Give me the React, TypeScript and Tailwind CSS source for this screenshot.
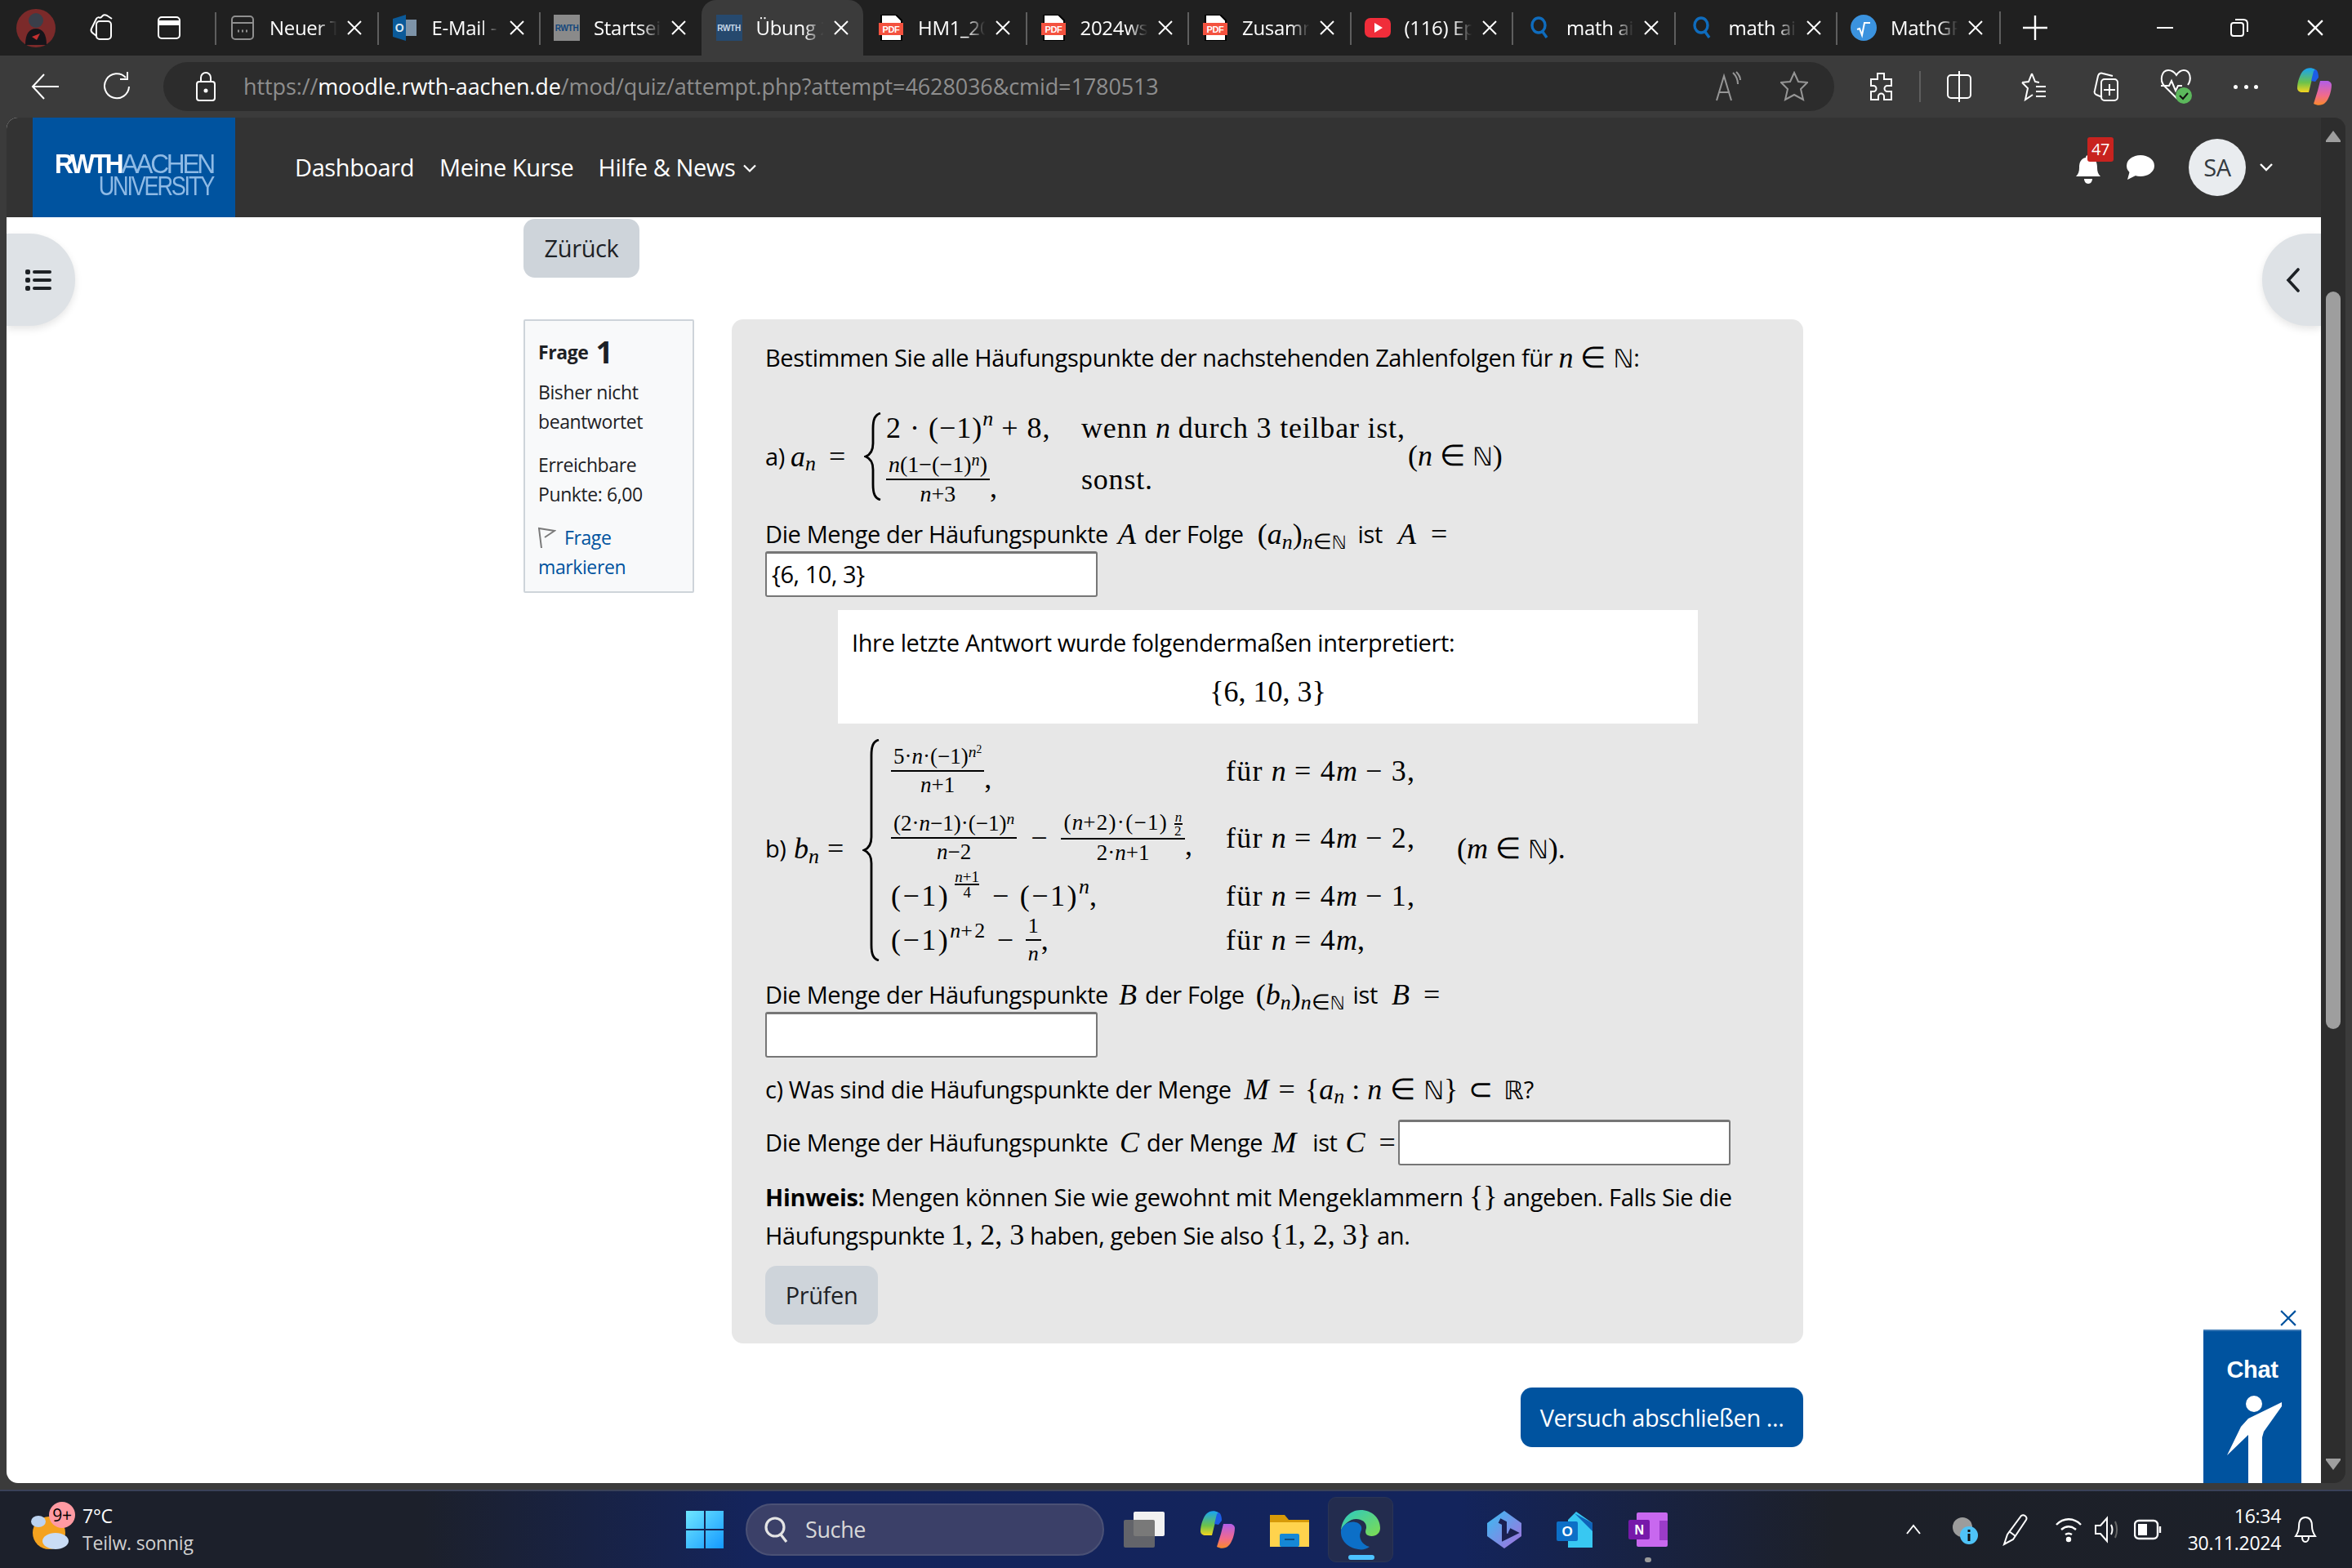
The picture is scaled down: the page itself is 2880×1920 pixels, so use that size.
import { ReactNode } from "react";

const serif = "font-['Liberation_Serif',serif] tracking-normal";

function Mi({ children }: { children: ReactNode }) {
  return <i className={serif}>{children}</i>;
}

function Dbl({ children }: { children: ReactNode }) {
  return <span className="font-['DejaVu_Sans',sans-serif] text-[0.86em] not-italic">{children}</span>;
}

function Op({ children, gap = "mx-[12px]" }: { children: ReactNode; gap?: string }) {
  return <span className={gap}>{children}</span>;
}

function Sp({ children }: { children: ReactNode }) {
  return <span className="relative top-[-0.42em] text-[0.72em] leading-[0]">{children}</span>;
}

function Sb({ children }: { children: ReactNode }) {
  return <span className="relative top-[0.22em] text-[0.72em] leading-[0]">{children}</span>;
}

function Frac({ n, d, bar = "h-[2px]" }: { n: ReactNode; d: ReactNode; bar?: string }) {
  return (
    <span className="inline-flex flex-col items-stretch text-center align-middle leading-none">
      <span className="px-[3px] pb-[3px]">{n}</span>
      <span className={`${bar} bg-black`} />
      <span className="px-[3px] pt-[3px]">{d}</span>
    </span>
  );
}

function Brace({ height }: { height: number }) {
  return (
    <svg width="22" height={height} viewBox={`0 0 22 ${height}`} className="shrink-0 self-start">
      <path
        d={`M20 1 C13 3 11 9 11 20 L11 ${height / 2 - 16} C11 ${height / 2 - 6} 7 ${height / 2 - 2} 2 ${height / 2} C7 ${height / 2 + 2} 11 ${height / 2 + 6} 11 ${height / 2 + 16} L11 ${height - 20} C11 ${height - 9} 13 ${height - 3} 20 ${height - 1}`}
        fill="none"
        stroke="#000"
        strokeWidth="2.8"
      />
    </svg>
  );
}

function AnswerInput({ value, className = "" }: { value?: string; className?: string }) {
  return (
    <div className={`h-[56px] w-[407px] shrink-0 rounded-[3px] border-2 border-t-[3px] border-[#767676] bg-white pl-[6px] text-[29px] leading-[50px] tracking-[-0.45px] text-black ${className}`}>
      {value}
    </div>
  );
}

function CloseX({ size = 18, color = "#fff" }: { size?: number; color?: string }) {
  return (
    <svg width={size} height={size} viewBox="0 0 18 18" stroke={color} strokeWidth="2" className="shrink-0">
      <path d="M1 1l16 16M17 1L1 17" />
    </svg>
  );
}

function PdfIcon() {
  return (
    <svg width="30" height="32" viewBox="0 0 30 32">
      <path d="M3 0h18l7 7v25H3z" fill="#fff" stroke="#000" strokeWidth="2" />
      <rect x="0" y="10" width="30" height="15" fill="#f4523f" />
      <text x="15" y="22" fontSize="11" fontWeight="700" fill="#fff" textAnchor="middle" fontFamily="Liberation Sans">PDF</text>
    </svg>
  );
}

function SearchTabIcon() {
  return (
    <svg width="24" height="30" viewBox="0 0 24 30" fill="none" stroke="#0f6cbd" strokeWidth="3.4">
      <ellipse cx="11" cy="12" rx="8" ry="9" />
      <path d="M16 20l5 7" />
    </svg>
  );
}

function RwthIcon({ active }: { active?: boolean }) {
  return (
    <div className={`flex h-[32px] w-[32px] items-center justify-center text-[10px] font-bold font-['Liberation_Sans',sans-serif] ${active ? "bg-[#26496e] text-[#c5d6e6]" : "bg-[#8a8a8a] text-[#12467c]"}`}>
      RWTH
    </div>
  );
}

const tabs: { label: string; icon: ReactNode; active?: boolean }[] = [
  {
    label: "Neuer Tab",
    icon: (
      <svg width="28" height="32" viewBox="0 0 28 32" fill="none" stroke="#8f8f8f" strokeWidth="2">
        <rect x="1" y="2" width="26" height="28" rx="4" />
        <path d="M1 10h26" />
        <path d="M8 20h2M13 20h2M18 20h2" strokeWidth="3" />
      </svg>
    ),
  },
  {
    label: "E-Mail - Sa",
    icon: (
      <svg width="32" height="32" viewBox="0 0 32 32">
        <rect x="10" y="6" width="20" height="20" fill="#7d93a8" />
        <path d="M1 5l16-5v32L1 27z" fill="#0b5a99" />
        <text x="9" y="21" fontSize="14" fontWeight="700" fill="#d9e6f0" textAnchor="middle" fontFamily="Liberation Sans">O</text>
      </svg>
    ),
  },
  { label: "Startseite", icon: <RwthIcon /> },
  { label: "Übung 2", icon: <RwthIcon active />, active: true },
  { label: "HM1_2024", icon: <PdfIcon /> },
  { label: "2024ws_hm", icon: <PdfIcon /> },
  { label: "Zusammen", icon: <PdfIcon /> },
  {
    label: "(116) Epis",
    icon: (
      <svg width="32" height="32" viewBox="0 0 32 32">
        <rect x="0" y="4" width="32" height="24" rx="7" fill="#f02d3a" />
        <path d="M12 10l10 6-10 6z" fill="#fff" />
      </svg>
    ),
  },
  { label: "math ai", icon: <SearchTabIcon /> },
  { label: "math ai", icon: <SearchTabIcon /> },
  {
    label: "MathGPT",
    icon: (
      <svg width="32" height="32" viewBox="0 0 32 32">
        <circle cx="16" cy="16" r="16" fill="#3b93df" />
        <path d="M8 18l3-1 3 8 3-15h7" fill="none" stroke="#fff" strokeWidth="2" />
      </svg>
    ),
  },
];

function TabStrip() {
  return (
    <div className="flex h-[68px] shrink-0 items-center bg-[#202020] text-[24px] tracking-[-0.3px] text-white">
      <div className="flex w-[263px] shrink-0 items-center">
        <div className="ml-[20px] flex h-[47px] w-[48px] items-center justify-center rounded-full bg-[#7b2a2a]">
          <svg width="32" height="42" viewBox="0 0 32 42">
            <circle cx="16" cy="12" r="9" fill="#3a3f4a" />
            <path d="M3 42c0-14 5-20 13-20s13 6 13 20z" fill="#15151a" />
            <path d="M11 32l10-4-4 8z" fill="#c23030" />
          </svg>
        </div>
        <svg width="38" height="38" viewBox="0 0 38 38" fill="none" stroke="#fff" strokeWidth="2" className="ml-[37px]">
          <rect x="13" y="11" width="18" height="22" rx="4" />
          <path d="M13 29l-5-4c-2-2-2-3-1-5l6-12c1-2 3-2 5-1" />
          <path d="M18 7l3-3c1-1 3-1 5 0l6 4" />
        </svg>
        <svg width="32" height="32" viewBox="0 0 32 32" fill="none" stroke="#fff" strokeWidth="2" className="ml-[48px]">
          <rect x="3" y="3" width="26" height="26" rx="4" />
          <path d="M3 10h26" strokeWidth="6" />
        </svg>
      </div>
      {tabs.map((tab, i) => {
        const hideSep = tab.active || tabs[i - 1]?.active;
        return (
          <div
            key={i}
            className={`relative flex h-full w-[198.5px] shrink-0 items-center pl-[17px] ${tab.active ? "rounded-t-[18px] bg-[#3b3b3b]" : ""}`}
          >
            {!hideSep && <span className="absolute left-0 top-[15px] h-[40px] w-[2px] bg-[#5e5e5e]" />}
            <span className="flex w-[34px] shrink-0 justify-center">{tab.icon}</span>
            <span className="ml-[16px] w-[84px] overflow-hidden whitespace-nowrap [mask-image:linear-gradient(to_right,black_70%,transparent_98%)]">
              {tab.label}
            </span>
            <span className="ml-[11px]">
              <CloseX />
            </span>
          </div>
        );
      })}
      <span className="ml-[1px] h-[40px] w-[2px] bg-[#5e5e5e]" />
      <svg width="30" height="30" viewBox="0 0 30 30" stroke="#fff" strokeWidth="2.4" className="ml-[27px]">
        <path d="M15 0v30M0 15h30" />
      </svg>
      <span className="ml-[134px] h-[2px] w-[20px] bg-white" />
      <svg width="22" height="22" viewBox="0 0 22 22" fill="none" stroke="#fff" strokeWidth="2" className="ml-[70px]">
        <rect x="1" y="5" width="15" height="16" rx="3" />
        <path d="M6 1h10c3 0 5 2 5 5v10" />
      </svg>
      <span className="ml-[72px]">
        <CloseX size={20} />
      </span>
    </div>
  );
}

function ToolIcon({ w, children, className = "" }: { w: number; children: ReactNode; className?: string }) {
  return (
    <svg width={w} height="38" viewBox={`0 0 ${w} 38`} fill="none" stroke="#fff" strokeWidth="2" className={`shrink-0 ${className}`}>
      {children}
    </svg>
  );
}

function Toolbar() {
  return (
    <div className="flex h-[76px] shrink-0 items-center bg-[#3b3b3b]">
      <ToolIcon w={34} className="ml-[38px]">
        <path d="M2 19h32M16 4L2 19l14 15" />
      </ToolIcon>
      <ToolIcon w={34} className="ml-[54px]">
        <path d="M28 8a15 15 0 1 0 4 11" />
        <path d="M30 1v9h-9" />
      </ToolIcon>
      <div className="ml-[40px] flex h-[60px] w-[2046px] shrink-0 items-center rounded-full bg-[#2c2c2c]">
        <ToolIcon w={26} className="ml-[39px]">
          <rect x="2" y="13" width="22" height="23" rx="3" />
          <path d="M7 13V8a6 6 0 0 1 12 0v5" />
          <circle cx="13" cy="24" r="1.5" fill="#fff" />
        </ToolIcon>
        <div className="ml-[33px] flex-1 whitespace-nowrap text-[27px] tracking-[-0.11px] text-[#8e8e8e]">
          https://<span className="text-white">moodle.rwth-aachen.de</span>/mod/quiz/attempt.php?attempt=4628036&amp;cmid=1780513
        </div>
        <ToolIcon w={32} className="opacity-50">
          <path d="M2 36L11 6l9 30M5 26h13M22 2c4 4 6 8 6 14M26 1c3 3 5 6 5 10" />
        </ToolIcon>
        <ToolIcon w={34} className="ml-[48px] mr-[32px] opacity-50">
          <path d="M17 2l5 11 11 1-8 8 3 13-11-6-11 6 3-13-8-8 11-1z" />
        </ToolIcon>
      </div>
      <ToolIcon w={32} className="ml-[41px]">
        <path d="M12 3h8v7h9v8h-5a3 3 0 0 0 0 7h5v10h-9v-4a3 3 0 0 0-7 0v4H4V25h3a3 3 0 0 0 0-7H4v-8h8z" />
      </ToolIcon>
      <span className="ml-[31px] h-[38px] w-[2px] bg-[#5e5e5e]" />
      <ToolIcon w={32} className="ml-[31px]">
        <rect x="2" y="5" width="28" height="28" rx="4" />
        <path d="M16 0v38" />
      </ToolIcon>
      <ToolIcon w={34} className="ml-[58px]">
        <path d="M15 3l4 10 5 1M3 14l8-1 4-10M3 14l7 7-3 14 9-6M20 19h12M20 25h12M20 31h12" />
      </ToolIcon>
      <ToolIcon w={34} className="ml-[54px]">
        <path d="M13 32l-7-3c-2-1-3-3-2-5l4-18c1-3 3-4 6-3l12 3" />
        <rect x="12" y="10" width="20" height="26" rx="4" />
        <path d="M22 16v14M15 23h14" />
      </ToolIcon>
      <svg width="40" height="46" viewBox="0 0 40 46" fill="none" stroke="#fff" strokeWidth="2" className="ml-[49px] shrink-0">
        <path d="M22 38L6 22C0 15 3 3 11 3c5 0 8 3 10 6 2-3 5-6 9-6 8 0 10 11 5 18" />
        <path d="M2 22h10l3-6 5 12 3-6h5" />
        <circle cx="30" cy="34" r="10" fill="#5cb85c" stroke="none" />
        <path d="M25 34l4 4 6-7" stroke="#111" />
      </svg>
      <div className="ml-[51px] flex w-[30px] shrink-0 justify-between">
        <span className="h-[5px] w-[5px] rounded-full bg-white" />
        <span className="h-[5px] w-[5px] rounded-full bg-white" />
        <span className="h-[5px] w-[5px] rounded-full bg-white" />
      </div>
      <CopilotIcon className="ml-[46px]" />
    </div>
  );
}

function CopilotIcon({ className = "" }: { className?: string }) {
  return (
    <svg width="46" height="46" viewBox="0 0 46 46" className={`shrink-0 ${className}`}>
      <defs>
        <linearGradient id="cpA" x1="0" y1="0" x2="0" y2="1">
          <stop offset="0" stopColor="#17a3f5" />
          <stop offset="0.6" stopColor="#6cc24a" />
          <stop offset="1" stopColor="#f5d520" />
        </linearGradient>
        <linearGradient id="cpB" x1="0" y1="0" x2="0" y2="1">
          <stop offset="0" stopColor="#b25ee8" />
          <stop offset="0.6" stopColor="#f16a8c" />
          <stop offset="1" stopColor="#f98a2a" />
        </linearGradient>
      </defs>
      <path d="M10 3c-4 3-8 14-8 22 0 3 3 5 6 5h8l3-12 5-16c-5-3-11-2-14 1z" fill="url(#cpA)" />
      <path d="M36 43c4-3 8-14 8-22 0-3-3-5-6-5h-8l-3 12-5 16c5 3 11 2 14-1z" fill="url(#cpB)" />
      <path d="M24 2c2 0 4 4 4 10l-4 5-5-1 3-12z" fill="#1b5de6" />
    </svg>
  );
}

function NavBar() {
  return (
    <nav className="flex h-[122px] shrink-0 items-center bg-[#333333] pl-[32px] text-[29px] tracking-[-0.4px] text-white">
      <div className="flex h-full w-[248px] shrink-0 flex-col items-end justify-center bg-[#00539f] pr-[27px] pt-[18px] font-['Liberation_Sans',sans-serif] text-[33px] font-bold leading-[27px] tracking-[-3.4px]">
        <div className="origin-right scale-x-[0.96]">
          <span className="text-white">RWTH</span>
          <span className="font-normal text-[#8ebae5]">AACHEN</span>
        </div>
        <div className="origin-right scale-x-[0.82] font-normal tracking-[-2.7px] text-[#8ebae5]">UNIVERSITY</div>
      </div>
      <a className="ml-[73px]">Dashboard</a>
      <a className="ml-[31px]">Meine Kurse</a>
      <a className="ml-[30px]">Hilfe &amp; News</a>
      <svg width="18" height="11" viewBox="0 0 18 11" fill="none" stroke="#fff" strokeWidth="2.2" className="ml-[9px] mt-[2px]">
        <path d="M2 1.5l7 7 7-7" />
      </svg>
      <div className="ml-auto flex items-center">
        <div className="relative h-[40px] w-[30px]">
          <svg width="30" height="36" viewBox="0 0 30 36" fill="#fff" className="absolute left-0 top-[5px]">
            <path d="M15 0c2 0 3 1 3 3 6 1 8 6 8 12 0 5 1 8 4 11H0c3-3 4-6 4-11 0-6 2-11 8-12 0-2 1-3 3-3z" />
            <path d="M10 29h10c0 3-2 6-5 6s-5-3-5-6z" />
          </svg>
          <span className="absolute left-[14px] top-[-17px] flex h-[30px] w-[32px] items-center justify-center rounded-[3px] bg-[#c8231f] text-[20px] leading-none">47</span>
        </div>
        <svg width="34" height="30" viewBox="0 0 34 30" fill="#fff" className="ml-[32px]">
          <ellipse cx="17" cy="13" rx="17" ry="13" />
          <path d="M4 19l-3 11 12-6z" />
        </svg>
        <div className="ml-[42px] flex h-[70px] w-[70px] items-center justify-center rounded-full bg-[#e9ecef] text-[#343a40]">SA</div>
        <svg width="18" height="12" viewBox="0 0 18 12" fill="none" stroke="#fff" strokeWidth="2.4" className="ml-[16px] mr-[58px]">
          <path d="M2 2l7 7 7-7" />
        </svg>
      </div>
    </nav>
  );
}

function Sidebar() {
  return (
    <aside className="h-[335px] w-[209px] shrink-0 rounded-[2px] border-2 border-[#ced4da] bg-[#f8f9fa] pl-[16px] pt-[18px] text-[23px] leading-[36px] tracking-[-0.4px] text-[#1d2125]">
      <div className="flex h-[40px] items-center">
        <span className="font-bold">Frage</span>
        <span className="ml-[9px] text-[37px] font-bold">1</span>
      </div>
      <div className="mt-[11px]">Bisher nicht</div>
      <div>beantwortet</div>
      <div className="mt-[17px]">Erreichbare</div>
      <div>Punkte: 6,00</div>
      <div className="mt-[17px] flex items-center text-[#00539f]">
        <svg width="22" height="26" viewBox="0 0 22 26" fill="none" stroke="#7a7a7a" strokeWidth="2">
          <path d="M4 26L1 2l19 3-12 8" />
        </svg>
        <span className="ml-[10px]">Frage</span>
      </div>
      <div className="text-[#00539f]">markieren</div>
    </aside>
  );
}

function QuestionBox() {
  const m = `${serif} text-[36px]`;
  return (
    <section className="ml-[46px] h-[1254px] w-[1312px] shrink-0 rounded-[14px] bg-[#e7e7e7] pl-[41px] pt-[28px] text-[29px] leading-[38px] text-black">
      <p className="flex h-[38px] items-center whitespace-nowrap">
        Bestimmen Sie alle Häufungspunkte der nachstehenden Zahlenfolgen für&nbsp;<span className={m}><Mi>n</Mi> ∈ <Dbl>ℕ</Dbl></span>:
      </p>

      {/* a) */}
      <div className="mt-[48px] flex h-[110px] items-center whitespace-nowrap pb-[3px]">
        <span className="w-[31px]">a)</span>
        <span className={`${m} w-[47px]`}><Mi>a</Mi><Sb><Mi>n</Mi></Sb></span>
        <span className={`${m} w-[43px]`}>=</span>
        <Brace height={108} />
        <div className={`ml-[5px] grid h-[126px] w-[640px] shrink-0 self-start grid-cols-[239px_1fr] grid-rows-[38px_88px] ${m}`}>
          <span className="flex items-center tracking-[1px]">2 · (−1)<Sp><Mi>n</Mi></Sp>&nbsp;+ 8,</span>
          <span className="flex items-center tracking-[0.8px]">wenn&nbsp;<Mi>n</Mi>&nbsp;durch 3 teilbar ist,</span>
          <span className="flex items-center text-[28px]">
            <Frac
              n={<><Mi>n</Mi>(1−(−1)<Sp><Mi>n</Mi></Sp>)</>}
              d={<><Mi>n</Mi>+3</>}
            />
            <span className="mt-[20px] text-[36px]">,</span>
          </span>
          <span className="flex items-center tracking-[0.8px]">sonst.</span>
        </div>
        <span className={`${m} ml-[-1px]`}>(<Mi>n</Mi> ∈ <Dbl>ℕ</Dbl>)</span>
      </div>

      <p className="mt-[20px] flex h-[38px] items-center whitespace-nowrap">
        Die Menge der Häufungspunkte<span className={`${m} ml-[12px] mr-[10px] tracking-[1px]`}><Mi>A</Mi></span>der Folge
        <span className={`${m} ml-[17px] tracking-[1px]`}>(<Mi>a</Mi><Sb><Mi>n</Mi></Sb>)<Sb><Mi>n</Mi>∈<Dbl>ℕ</Dbl></Sb></span>
        <span className="ml-[14px]">ist</span>
        <span className={`${m} ml-[19px]`}><Mi>A</Mi><span className="ml-[18px]">=</span></span>
      </p>
      <AnswerInput value="{6, 10, 3}" className="mt-[2px]" />

      <div className="ml-[89px] mt-[16px] h-[139px] w-[1053px] bg-white pl-[17px] pt-[21px]">
        <p className="whitespace-nowrap">Ihre letzte Antwort wurde folgendermaßen interpretiert:</p>
        <p className={`${serif} mt-[22px] pr-[17px] text-center text-[36px]`}>{"{6, 10, 3}"}</p>
      </div>

      {/* b) */}
      <div className="mt-[19px] flex h-[272px] items-center whitespace-nowrap pb-[4px]">
        <span className="w-[35px]">b)</span>
        <span className={`${m} w-[41px]`}><Mi>b</Mi><Sb><Mi>n</Mi></Sb></span>
        <span className={`${m} w-[43px]`}>=</span>
        <Brace height={272} />
        <div className={`ml-[13px] mt-[-3px] grid h-[272px] w-[697px] shrink-0 self-start grid-cols-[410px_1fr] grid-rows-[84px_80px_62px_46px] ${m}`}>
          <span className="flex items-center text-[27px]">
            <Frac
              n={<>5·<Mi>n</Mi>·(−1)<Sp><Mi>n</Mi><span className="relative top-[-0.35em] text-[0.7em]">2</span></Sp></>}
              d={<><Mi>n</Mi>+1</>}
            />
            <span className="mt-[18px] text-[36px]">,</span>
          </span>
          <span className="flex items-center tracking-[1.2px]">für&nbsp;<Mi>n</Mi>&nbsp;= 4<Mi>m</Mi>&nbsp;− 3,</span>
          <span className="flex items-center text-[27px]">
            <Frac
              n={<>(2·<Mi>n</Mi>−1)·(−1)<Sp><Mi>n</Mi></Sp></>}
              d={<><Mi>n</Mi>−2</>}
            />
            <span className="mx-[17px] text-[36px]">−</span>
            <Frac
              n={<span className="tracking-[1.3px]">(<Mi>n</Mi>+2)·(−1)<span className="relative top-[-0.6em] my-[-12px] ml-[8px] inline-flex flex-col text-center text-[17px] leading-[15px]"><Mi>n</Mi><span className="h-[2px] bg-black" />2</span></span>}
              d={<>2·<Mi>n</Mi>+1</>}
            />
            <span className="mt-[18px] text-[36px]">,</span>
          </span>
          <span className="flex items-center tracking-[1.2px]">für&nbsp;<Mi>n</Mi>&nbsp;= 4<Mi>m</Mi>&nbsp;− 2,</span>
          <span className="flex items-center tracking-[2.5px]">
            (−1)<span className="relative top-[-14px] ml-[6px] mr-[16px] inline-flex flex-col text-center text-[19px] leading-[17px] tracking-normal"><span><Mi>n</Mi>+1</span><span className="h-[2px] bg-black" /><span>4</span></span>
            <Op gap="mr-[11px]">−</Op>(−1)<Sp><Mi>n</Mi></Sp>,
          </span>
          <span className="flex items-center tracking-[1.2px]">für&nbsp;<Mi>n</Mi>&nbsp;= 4<Mi>m</Mi>&nbsp;− 1,</span>
          <span className="flex items-center tracking-[2.5px]">
            (−1)<Sp><Mi>n</Mi>+2</Sp><Op gap="mx-[12px]">−</Op>
            <span className="text-[26px] tracking-normal"><Frac n="1" d={<Mi>n</Mi>} /></span>,
          </span>
          <span className="flex items-center tracking-[1.2px]">für&nbsp;<Mi>n</Mi>&nbsp;= 4<Mi>m</Mi>,</span>
        </div>
        <span className={`${m} ml-[-4px]`}>(<Mi>m</Mi> ∈ <Dbl>ℕ</Dbl>).</span>
      </div>

      <p className="mt-[22px] flex h-[38px] items-center whitespace-nowrap">
        Die Menge der Häufungspunkte<span className={`${m} ml-[13px] mr-[10px] tracking-[1px]`}><Mi>B</Mi></span>der Folge
        <span className={`${m} ml-[14px] tracking-[1px]`}>(<Mi>b</Mi><Sb><Mi>n</Mi></Sb>)<Sb><Mi>n</Mi>∈<Dbl>ℕ</Dbl></Sb></span>
        <span className="ml-[10px]">ist</span>
        <span className={`${m} ml-[17px]`}><Mi>B</Mi><span className="ml-[17px]">=</span></span>
      </p>
      <AnswerInput className="mt-[2px]" />

      <p className="mt-[20px] flex h-[38px] items-center whitespace-nowrap">
        c) Was sind die Häufungspunkte der Menge
        <span className={`${m} ml-[16px] tracking-[1.5px]`}>
          <Mi>M</Mi><Op>=</Op>{"{"}<Mi>a</Mi><Sb><Mi>n</Mi></Sb><Op gap="mx-[9px]">:</Op><Mi>n</Mi><Op gap="mx-[10px]">∈</Op><Dbl>ℕ</Dbl>{"}"}<Op gap="mx-[13px]">⊂</Op><Dbl>ℝ</Dbl>
        </span>?
      </p>

      <div className="mt-[18px] flex h-[56px] items-center whitespace-nowrap">
        <span className="flex w-[775px] shrink-0 items-center">
          Die Menge der Häufungspunkte<span className={`${m} ml-[14px] mr-[9px] tracking-[1px]`}><Mi>C</Mi></span>der Menge
          <span className={`${m} ml-[11px] mr-[20px] tracking-[1px]`}><Mi>M</Mi></span>ist
          <span className={`${m} ml-[10px]`}><Mi>C</Mi><span className="ml-[17px]">=</span></span>
        </span>
        <AnswerInput />
      </div>

      <p className="mt-[15px] whitespace-nowrap leading-[46px]">
        <span className="tracking-[-0.22px]"><b>Hinweis:</b> Mengen können Sie wie gewohnt mit Mengeklammern</span> <span className={`${m} tracking-[4px]`}>{"{}"}</span> angeben. Falls Sie die
        <br />
        Häufungspunkte <span className={m}>1, 2, 3</span> haben, geben Sie also <span className={m}>{"{1, 2, 3}"}</span> an.
      </p>

      <button className="mt-[14px] h-[72px] w-[138px] rounded-[14px] bg-[#ced4da] text-[#1d2125]">Prüfen</button>
    </section>
  );
}

function BrowserContent() {
  return (
    <div className="flex min-h-0 flex-1 bg-[#3b3b3b] px-[8px] pb-[8px]">
      <div className="relative flex min-w-0 flex-1 flex-col overflow-hidden rounded-tl-[14px] rounded-bl-[14px] bg-white">
        <NavBar />
        <main className="flex-1 pl-[633px]">
          <button className="mt-[2px] block h-[72px] w-[142px] rounded-[14px] bg-[#ced4da] text-[29px] text-[#1d2125]">Zürück</button>
          <div className="mt-[51px] flex">
            <Sidebar />
            <QuestionBox />
          </div>
          <div className="ml-[1221px] mt-[54px] flex h-[73px] w-[346px] items-center justify-center whitespace-nowrap rounded-[14px] bg-[#00539f] text-[29px] tracking-[-0.45px] text-white">
            Versuch abschließen ...
          </div>
        </main>

        {/* course index / block drawer toggles */}
        <div className="absolute left-0 top-[142px] flex h-[113px] w-[84px] items-center rounded-r-[56px] bg-[#dee2e6] pl-[23px] shadow-[0_4px_10px_rgba(0,0,0,0.1)]">
          <svg width="32" height="26" viewBox="0 0 32 26" fill="#1d2125">
            <rect x="0" y="0" width="6" height="6" rx="2" />
            <rect x="0" y="10" width="6" height="6" rx="2" />
            <rect x="0" y="20" width="6" height="6" rx="2" />
            <rect x="9" y="1" width="23" height="4" rx="2" />
            <rect x="9" y="11" width="23" height="4" rx="2" />
            <rect x="9" y="21" width="23" height="4" rx="2" />
          </svg>
        </div>
        <div className="absolute right-0 top-[142px] flex h-[113px] w-[72px] items-center rounded-l-[56px] bg-[#dee2e6] pl-[29px] shadow-[0_4px_10px_rgba(0,0,0,0.1)]">
          <svg width="18" height="30" viewBox="0 0 18 30" fill="none" stroke="#1d2125" strokeWidth="3.6" strokeLinecap="round">
            <path d="M15 2L3 15l12 13" />
          </svg>
        </div>

        {/* chat widget */}
        <div className="absolute bottom-0 right-[24px] h-[188px] w-[120px] border-t-2 border-[#3a78b5] bg-[#00539f] text-center font-['Liberation_Sans',sans-serif] text-[29px] font-bold text-white">
          <div className="mt-[32px] leading-[30px]">Chat</div>
          <svg width="70" height="108" viewBox="0 0 70 108" fill="#fff" className="absolute left-[28px] top-[78px]">
            <circle cx="34" cy="11" r="10" />
            <path d="M68 9L27 29 18 39 1 74 27 49V108H44V52L46 45 68 14z" />
          </svg>
        </div>
        <div className="absolute bottom-[192px] right-[30px]">
          <CloseX size={20} color="#00539f" />
        </div>
      </div>

      {/* scrollbar */}
      <div className="relative w-[30px] shrink-0 rounded-tr-[14px] rounded-br-[14px] bg-[#2d2d2d]">
        <svg width="18" height="14" viewBox="0 0 18 14" fill="#9e9e9e" className="absolute left-[6px] top-[16px]">
          <path d="M9 0l9 12v2H0v-2z" />
        </svg>
        <div className="absolute left-[6px] top-[213px] h-[903px] w-[18px] rounded-[9px] bg-[#9e9e9e]" />
        <svg width="18" height="14" viewBox="0 0 18 14" fill="#9e9e9e" className="absolute bottom-[16px] left-[6px]">
          <path d="M9 14L0 2V0h18v2z" />
        </svg>
      </div>
    </div>
  );
}

function TaskSlot({ className = "", children }: { className?: string; children: ReactNode }) {
  return <div className={`flex h-[64px] w-[80px] shrink-0 items-center justify-center ${className}`}>{children}</div>;
}

function Taskbar() {
  return (
    <div className="flex h-[96px] shrink-0 items-center border-t-2 border-[#3a4158] bg-[linear-gradient(90deg,#1c202b_0%,#1c202b_18%,#14245c_32%,#13245c_62%,#1d2028_78%,#1c2029_100%)] text-white">
      {/* weather */}
      <div className="relative ml-[38px] h-[56px] w-[50px] shrink-0">
        <svg width="50" height="56" viewBox="0 0 50 56">
          <circle cx="22" cy="32" r="20" fill="#f4a21f" />
          <ellipse cx="9" cy="18" rx="9" ry="7" fill="#bcd3f0" />
          <ellipse cx="30" cy="42" rx="16" ry="10" fill="#c9dcf5" />
        </svg>
        <span className="absolute left-[22px] top-[-6px] flex h-[32px] w-[32px] items-center justify-center rounded-full bg-[#ff9aa2] text-[21px] leading-none text-black">9+</span>
      </div>
      <div className="ml-[13px] w-[720px] shrink-0 text-[23px] leading-[33px] tracking-[-0.2px]">
        <div>7°C</div>
        <div className="text-[#d0d0d0]">Teilw. sonnig</div>
      </div>
      {/* start + search */}
      <svg width="46" height="46" viewBox="0 0 46 46" className="ml-[19px] shrink-0">
        <defs>
          <linearGradient id="win" x1="0" y1="0" x2="1" y2="1">
            <stop offset="0" stopColor="#6fe6ff" />
            <stop offset="1" stopColor="#1499ff" />
          </linearGradient>
        </defs>
        <path d="M0 0h22v22H0zM24 0h22v22H24zM0 24h22v22H0zM24 24h22v22H24z" fill="url(#win)" />
      </svg>
      <div className="ml-[27px] flex h-[64px] w-[439px] shrink-0 items-center rounded-full border-2 border-[#4b5175] bg-[#3b4068]">
        <svg width="30" height="34" viewBox="0 0 30 34" fill="none" stroke="#e4e4e4" strokeWidth="3.2" className="ml-[20px]">
          <circle cx="14" cy="14" r="11" />
          <path d="M21 23l7 9" />
        </svg>
        <span className="ml-[21px] text-[27px] text-[#d8d8d8]">Suche</span>
      </div>
      {/* pinned apps */}
      <svg width="50" height="44" viewBox="0 0 50 44" className="ml-[24px] shrink-0">
        <rect x="12" y="0" width="38" height="30" rx="2" fill="#f1f1f1" />
        <rect x="0" y="10" width="38" height="34" rx="2" fill="#6b6b6b" opacity="0.9" />
      </svg>
      <TaskSlot className="ml-[25px]"><CopilotIcon /></TaskSlot>
      <TaskSlot className="ml-[8px]">
        <svg width="48" height="42" viewBox="0 0 48 42">
          <path d="M0 3h18l5 6h25v33H0z" fill="#d79a08" />
          <path d="M0 12h48v30H0z" fill="#ffd34d" />
          <rect x="12" y="26" width="24" height="16" rx="2" fill="#1588d6" />
          <rect x="18" y="32" width="12" height="2" fill="#0c4f85" />
        </svg>
      </TaskSlot>
      <div className="relative ml-[7px] flex h-[80px] w-[80px] shrink-0 items-center justify-center rounded-[10px] border border-[#2b3555] bg-[#232c4e]">
        <svg width="50" height="50" viewBox="0 0 50 50">
          <defs>
            <linearGradient id="edgeA" x1="0" y1="0" x2="1" y2="1">
              <stop offset="0" stopColor="#2ac9c4" />
              <stop offset="1" stopColor="#7fdc4f" />
            </linearGradient>
          </defs>
          <path d="M25 1c14 0 24 10 24 22 0 8-8 12-15 9-4-2-3-6-2-9C33 14 22 10 14 13 8 16 3 21 1 26 2 12 12 1 25 1z" fill="url(#edgeA)" />
          <path d="M1 26c3-9 13-13 21-9 5 3 5 7 3 11-3 7 2 16 11 18-4 3-9 4-14 3C9 47 0 38 1 26z" fill="#0c6fc7" />
        </svg>
        <span className="absolute bottom-[2px] left-[24px] h-[6px] w-[32px] rounded-full bg-[#4cc2ff]" />
      </div>
      <TaskSlot className="ml-[96px]">
        <svg width="42" height="46" viewBox="0 0 42 46">
          <defs>
            <linearGradient id="bingA" x1="0" y1="0" x2="1" y2="1">
              <stop offset="0" stopColor="#37bdf2" />
              <stop offset="1" stopColor="#a86edd" />
            </linearGradient>
          </defs>
          <path d="M21 0l21 15v16L21 46 0 31V15z" fill="url(#bingA)" />
          <path d="M15 12l6 3v18l12-6-6-3" fill="none" stroke="#1a2050" strokeWidth="6" />
        </svg>
      </TaskSlot>
      <TaskSlot className="ml-[8px]">
        <svg width="48" height="44" viewBox="0 0 48 44">
          <path d="M24 0l20 14v30H14V10z" fill="#38c8f2" />
          <path d="M22 2l22 22v-10z" fill="#0f62b8" />
          <rect x="0" y="12" width="26" height="24" rx="2" fill="#0c6fc7" />
          <text x="13" y="30" fontSize="17" fontWeight="700" fill="#fff" textAnchor="middle" fontFamily="Liberation Sans">O</text>
        </svg>
      </TaskSlot>
      <TaskSlot className="relative ml-[8px]">
        <svg width="48" height="42" viewBox="0 0 48 42">
          <rect x="10" y="0" width="38" height="42" rx="2" fill="#c868ef" />
          <rect x="38" y="10" width="10" height="24" fill="#9b3cc8" />
          <rect x="0" y="9" width="26" height="24" rx="2" fill="#7719aa" />
          <text x="13" y="27" fontSize="16" fontWeight="700" fill="#fff" textAnchor="middle" fontFamily="Liberation Sans">N</text>
        </svg>
        <span className="absolute bottom-[-8px] left-[36px] h-[6px] w-[8px] rounded-full bg-[#9a9a9a]" />
      </TaskSlot>
      {/* tray */}
      <svg width="20" height="14" viewBox="0 0 20 14" fill="none" stroke="#fff" strokeWidth="2" className="ml-[275px] shrink-0">
        <path d="M2 12L10 2l8 10" />
      </svg>
      <svg width="34" height="38" viewBox="0 0 34 38" className="ml-[36px] shrink-0">
        <circle cx="14" cy="16" r="12" fill="#9c9c9c" />
        <circle cx="22" cy="26" r="11" fill="#4fc3f7" />
        <rect x="20.5" y="24" width="3" height="9" fill="#111" />
        <rect x="20.5" y="19" width="3" height="3" fill="#111" />
      </svg>
      <svg width="34" height="40" viewBox="0 0 34 40" fill="none" stroke="#fff" strokeWidth="2" className="ml-[28px] shrink-0">
        <path d="M3 38l4-12L24 3c3-2 8 1 6 5L14 32z" />
        <path d="M9 22l8 6" />
      </svg>
      <svg width="34" height="34" viewBox="0 0 34 34" fill="none" stroke="#fff" strokeWidth="2.4" className="ml-[31px] shrink-0">
        <path d="M2 11c9-9 21-9 30 0M8 17c6-5 12-5 18 0M13 23c3-2 5-2 8 0" />
        <circle cx="17" cy="29" r="2" fill="#fff" />
      </svg>
      <svg width="32" height="34" viewBox="0 0 32 34" fill="none" stroke="#fff" strokeWidth="2" className="ml-[14px] shrink-0">
        <path d="M2 12h6l8-9v28l-8-9H2z" />
        <path d="M21 11c2 4 2 8 0 12" />
        <path d="M26 7c3 7 3 13 0 20" stroke="#666" />
      </svg>
      <svg width="34" height="26" viewBox="0 0 34 26" fill="none" stroke="#fff" strokeWidth="2.4" className="ml-[17px] shrink-0">
        <rect x="1" y="2" width="28" height="22" rx="5" />
        <rect x="5" y="6" width="11" height="14" fill="#fff" stroke="none" />
        <path d="M32 9v8" />
      </svg>
      <div className="ml-auto text-right text-[23px] leading-[33px] tracking-[-0.3px]">
        <div>16:34</div>
        <div>30.11.2024</div>
      </div>
      <svg width="28" height="34" viewBox="0 0 28 34" fill="none" stroke="#fff" strokeWidth="2" className="ml-[16px] mr-[43px] shrink-0">
        <path d="M14 2c6 0 8 5 8 11 0 6 2 9 4 12H2c2-3 4-6 4-12 0-6 2-11 8-11zM10 26c0 8 8 8 8 0" />
      </svg>
    </div>
  );
}

export default function App() {
  return (
    <div className="flex h-[1920px] w-[2880px] flex-col overflow-hidden bg-[#3b3b3b] font-['Open_Sans',sans-serif] tracking-[-0.38px]">
      <TabStrip />
      <Toolbar />
      <BrowserContent />
      <Taskbar />
    </div>
  );
}
